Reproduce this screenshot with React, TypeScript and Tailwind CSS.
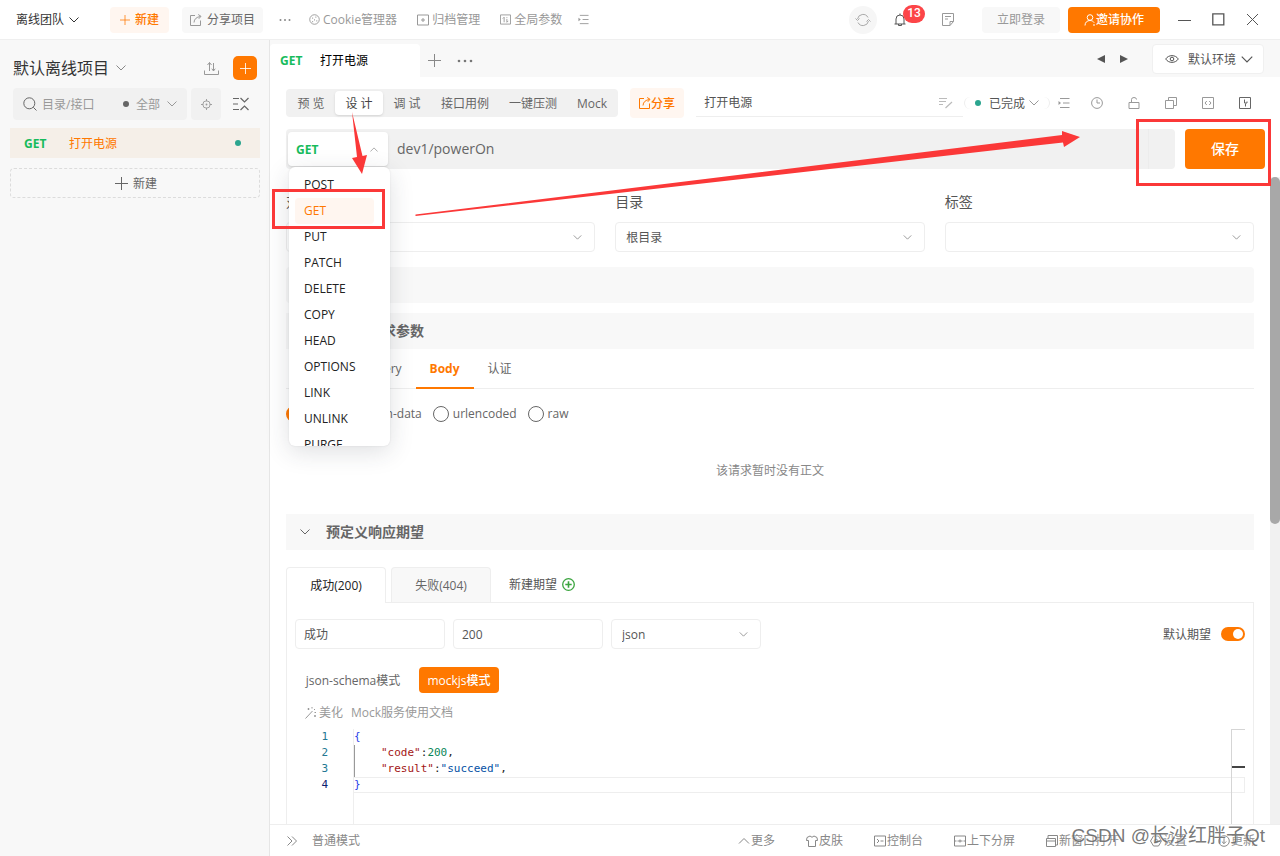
import React, { useState } from "react";

type IconProps = { className?: string; children: React.ReactNode; box?: string; sw?: number };

function Svg({ className = "h-3 w-3", children, box = "0 0 12 12", sw = 1 }: IconProps) {
  return (
    <svg viewBox={box} className={`shrink-0 ${className}`} fill="none" stroke="currentColor" strokeWidth={sw} aria-hidden="true">
      {children}
    </svg>
  );
}

const Chevron = ({ className = "h-1.5 w-2.5" }: { className?: string }) => (
  <Svg className={className} box="0 0 10 6"><path d="M.5.5 5 5 9.500.5" /></Svg>
);
const ChevronUp = ({ className = "h-1.5 w-2.5" }: { className?: string }) => (
  <Svg className={className} box="0 0 10 6"><path d="M.5 5.500 5 1l4.500 4.500" /></Svg>
);
const Plus = ({ className = "h-[13px] w-[13px]" }: { className?: string }) => (
  <Svg className={className} box="0 0 13 13"><path d="M6.500 0v13M0 6.500h13" /></Svg>
);
const Share = ({ className = "h-3 w-3" }: { className?: string }) => (
  <Svg className={className}><path d="M5 1.500H.5v10h10V6.500M4 8.500C4.200 5 6.500 3 10.500 2.500M8.200.5l2.800 1.800-2.200 2.500" /></Svg>
);
const Dots = ({ className = "h-1 w-3" }: { className?: string }) => (
  <svg viewBox="0 0 12 3" className={`shrink-0 ${className}`} fill="currentColor" aria-hidden="true">
    <circle cx="1.500" cy="1.500" r="1" /><circle cx="6" cy="1.500" r="1" /><circle cx="10.500" cy="1.500" r="1" />
  </svg>
);
const Indent = ({ className = "h-3 w-3" }: { className?: string }) => (
  <Svg className={className}><path d="M2 1.500h9.500M5 6h6.500M2 10.500h9.500" /><path d="M.5 4v4L3 6z" fill="currentColor" stroke="none" /></Svg>
);

function HeaderLink({ icon, label }: { icon: React.ReactNode; label: string }) {
  return <button className="flex items-center gap-[3px] text-[#999]">{icon}{label}</button>;
}

function Header() {
  return (
    <header className="flex h-10 shrink-0 items-center border-b border-[#efefef] bg-white pl-4 pr-[21px]">
      <button className="flex items-center gap-[5px] text-[#333]">离线团队<Chevron /></button>
      <button className="ml-[31px] flex h-[26px] items-center gap-[5px] rounded bg-[#fff6f0] px-2.5 font-medium text-[#ff7800]">
        <Plus className="h-2.5 w-2.5" />新建
      </button>
      <button className="ml-[13px] flex h-[26px] items-center gap-[5px] rounded bg-[#f8f8f8] px-2 text-[#666]">
        <Share className="h-3 w-3 text-[#999]" />分享项目
      </button>
      <button aria-label="更多" className="ml-4 text-[#888]"><Dots /></button>
      <nav className="ml-[18px] flex items-center gap-5">
        <HeaderLink label="Cookie管理器" icon={<Svg className="h-[11px] w-[11px]"><circle cx="6" cy="6" r="5.200" /><path d="M3.500 4.500h1M7 3.500h1M5.500 6.500h1M8 7.500h1M3.500 8.300h1" strokeWidth="1.300" /></Svg>} />
        <HeaderLink label="归档管理" icon={<Svg><path d="M.5 1h11v10H.5zM6 4v4M4 6h4" /></Svg>} />
        <HeaderLink label="全局参数" icon={<Svg className="h-[11px] w-[11px]"><path d="M.5 1h11v10H.5zM4.500 9V3.500L3 5M7.500 3.500v1M7.500 5.500V9L9 7.500" /></Svg>} />
        <button aria-label="缩进" className="-ml-1 text-[#999]"><Indent className="h-[11px] w-[11px]" /></button>
      </nav>
      <div className="ml-auto flex items-center">
        <button aria-label="同步" className="flex h-7 w-7 items-center justify-center rounded-full bg-[#f6f6f6] text-[#aaa]">
          <Svg className="h-4 w-4" box="0 0 16 16"><path d="M2.500 7A5.600 5.600 0 0 1 13 5.500M13.500 9A5.600 5.600 0 0 1 3 10.500M.5 6.500l2 2 2-2M11.500 9.500l2-2 2 2" /></Svg>
        </button>
        <button aria-label="通知 13" className="relative ml-4 text-[#555]">
          <Svg className="h-3.5 w-3.5" box="0 0 14 14"><path d="M3 11V6a4 4 0 0 1 8 0v5M1.500 11h11M7 2V.5M5.500 11v1.500h3V11" /></Svg>
          <span className="absolute -top-2 left-2.5 flex h-[18px] w-[22px] items-center justify-center rounded-full bg-[#fc4548] font-[Roboto] text-[12px] font-medium text-white">13</span>
        </button>
        <button aria-label="文档" className="ml-[35px] text-[#999]">
          <Svg className="h-[13px] w-3" box="0 0 12 13"><path d="M.5.5h11v8l-3.500 4H.5zM11.500 8.500H8v4M3 3.500h6M3 6h3" /></Svg>
        </button>
        <button className="ml-7 h-[26px] rounded bg-[#f8f8f8] px-[15px] text-[#999]">立即登录</button>
        <button className="ml-2 flex h-[26px] items-center rounded bg-[#ff7800] px-4 font-medium text-white">
          <Svg><circle cx="6" cy="3.500" r="2.800" /><path d="M1 11.500C1 8.500 3 6.500 6 6.500c1.800 0 3.300.8 4.200 2.200M9 11h2" /></Svg>邀请协作
        </button>
        <div className="ml-[18px] flex items-center gap-[21px] text-[#555]">
          <button aria-label="最小化"><Svg className="h-[13px] w-[13px]" box="0 0 13 13"><path d="M0 7.500h13" /></Svg></button>
          <button aria-label="最大化"><Svg className="h-[13px] w-[13px]" box="0 0 13 13" sw={1.3}><path d="M.8.8h11v11H.8z" /></Svg></button>
          <button aria-label="关闭"><Svg className="h-[13px] w-[13px]" box="0 0 13 13"><path d="m1 1 11 11M12 1 1 12" /></Svg></button>
        </div>
      </div>
    </header>
  );
}

function Sidebar() {
  return (
    <aside className="w-[270px] shrink-0 border-r border-[#e6e6e6] bg-[#f8f8f8] pl-2.5 pr-[9px] pt-4">
      <div className="flex items-center pl-[3px] pr-[3px]">
        <button className="flex items-center gap-[7px] text-base leading-6 text-[#333]">默认离线项目<Chevron className="h-1.5 w-2.5 text-[#888]" /></button>
        <button aria-label="导入导出" className="ml-auto text-[#999]">
          <Svg className="h-[15px] w-[15px]" box="0 0 15 15"><path d="M.5 9.500v4h14v-4M5.500 10V1.500M3.500 4l2-2.500 2 2.500M9.500 2v8M7.800 7.700 9.500 10l1.700-2.300" /></Svg>
        </button>
        <button aria-label="新建" className="ml-3.5 flex h-6 w-6 items-center justify-center rounded-[5px] bg-[#ff7800] text-white"><Plus className="h-[11px] w-[11px]" /></button>
      </div>
      <div className="mt-2 flex items-center pl-[3px]">
        <div className="flex h-8 w-[174px] items-center rounded bg-[#f1f1f1] px-2.5">
          <Svg className="h-3.5 w-3.5 text-[#666]" box="0 0 14 14"><circle cx="6.300" cy="6.300" r="5.500" /><path d="m10.300 10.300 3.200 3.200" /></Svg>
          <input aria-label="搜索" placeholder="目录/接口" className="ml-[5px] w-0 flex-1 bg-transparent text-[12px] outline-none placeholder:text-[#999]" />
          <button className="flex items-center gap-[7px] text-[#999]"><i className="h-1.5 w-1.5 rounded-full bg-[#666]" />全部<Chevron className="h-1.5 w-2.5" /></button>
        </div>
        <button aria-label="定位" className="ml-1 flex h-8 w-[30px] items-center justify-center rounded bg-[#f1f1f1] text-[#999]">
          <Svg className="h-[11px] w-[11px]"><circle cx="6" cy="6" r="4" /><path d="M6 0v2.500M6 9.500V12M0 6h2.500M9.500 6H12" /><circle cx="6" cy="6" r="1" fill="currentColor" stroke="none" /></Svg>
        </button>
        <button aria-label="折叠" className="ml-3 text-[#666]">
          <Svg className="h-3.5 w-4" box="0 0 16 14" sw={1.2}><path d="M0 1.500h6M0 7h5M0 12.500h6M7.500 1l4 4 4-4M7.500 13l4-4 4 4" /></Svg>
        </button>
      </div>
      <a href="#power" className="mt-2 flex h-[30px] items-center bg-[#f5efe8] px-3.5">
        <b className="w-[45px] font-bold text-[#17bb5c]">GET</b>
        <span className="text-[#ff7800]">打开电源</span>
        <i className="ml-auto mr-[5px] h-1.5 w-1.5 rounded-full bg-[#2ba58f]" />
      </a>
      <button className="mt-2.5 flex h-[30px] w-full items-center justify-center gap-[5px] rounded border border-dashed border-[#dcdcdc] pl-0.5 text-[#666]">
        <Plus />新建
      </button>
    </aside>
  );
}

function TabBar() {
  return (
    <div className="flex h-[37px] shrink-0 items-end bg-[#f8f8f8] pr-4">
      <button className="flex h-[33px] w-[150px] items-center rounded-t bg-white pl-2.5">
        <b className="w-10 text-left font-bold text-[#17bb5c]">GET</b><span className="text-black">打开电源</span>
      </button>
      <button aria-label="新标签" className="flex h-[33px] items-center px-2 text-[#888]"><Plus /></button>
      <button aria-label="标签菜单" className="flex h-[33px] items-center px-2 text-[#777]"><Dots className="h-1 w-4" /></button>
      <div className="mb-1 ml-auto flex h-7 items-center">
        <button aria-label="上一个" className="text-[#555]"><svg viewBox="0 0 8 8" className="h-2 w-2" fill="currentColor"><path d="M8 0v8L0 4z" /></svg></button>
        <button aria-label="下一个" className="ml-[15px] text-[#555]"><svg viewBox="0 0 8 8" className="h-2 w-2" fill="currentColor"><path d="M0 0v8l8-4z" /></svg></button>
        <button className="ml-6 flex h-[30px] items-center rounded border border-[#f0f0f0] bg-white pl-3 pr-2.5 text-[#555]">
          <Svg className="mr-[9px] h-3.5 w-3.5" box="0 0 14 14"><path d="M.7 7C3.500 2.500 10.500 2.500 13.300 7 10.500 11.500 3.500 11.500.7 7z" /><circle cx="7" cy="7" r="1.800" /></Svg>
          默认环境<Chevron className="ml-[5px] h-[7px] w-3" />
        </button>
      </div>
    </div>
  );
}

const VIEWS = ["预 览", "设 计", "调 试", "接口用例", "一键压测", "Mock"];

function Toolbar() {
  return (
    <div className="mt-3 flex h-7 shrink-0 items-center pl-4 pr-[29px]">
      <div className="flex shrink-0 rounded bg-[#f1f1f1] px-px py-0.5 text-[#666]">
        {VIEWS.map((v, i) => (
          <button key={v} className={i === 1 ? "h-6 w-12 rounded bg-white text-[#444] shadow-sm" : i < 3 ? "h-6 w-12" : "h-6 px-2.5"}>{v}</button>
        ))}
      </div>
      <button className="ml-3 flex h-[30px] shrink-0 items-center rounded bg-[#fff6f0] px-[9px] font-medium text-[#ff7800]"><Share />分享</button>
      <label className="ml-3 mr-px flex h-7 min-w-0 flex-1 items-center border-b border-[#eee] pl-2 pr-2.5">
        <input aria-label="接口名称" defaultValue="打开电源" className="w-0 flex-1 text-[#555] outline-none" />
        <Svg className="h-3 w-3.5 text-[#bbb]" box="0 0 14 12" sw={1.2}><path d="M0 1.500h8M0 4.500h7M0 7.500h4M6.500 11l6.500-6" /></Svg>
      </label>
      <div className="flex h-3 items-center rounded-full border-x border-[#eee] px-2.5">
        <button className="flex items-center text-[#555]"><i className="mr-2 h-1.5 w-1.5 rounded-full bg-[#2ba58f]" />已完成<Chevron className="ml-1 h-1.5 w-2.5 text-[#999]" /></button>
      </div>
      <button aria-label="目录" className="ml-2 text-[#999]"><Indent /></button>
      <div className="ml-[21px] flex gap-[25px] text-[#999]">
        <button aria-label="历史"><Svg><circle cx="6" cy="6" r="5.400" /><path d="M6 2.500V6h3" /></Svg></button>
        <button aria-label="锁定"><Svg><path d="M1 5.500h10v6H1zM3.500 5.500v-3Q3.500.5 6 .5T8.500 2.500" /></Svg></button>
        <button aria-label="复制"><Svg><path d="M.5 3.500h8v8h-8zM3.500 3V.5h8v8H9" /></Svg></button>
        <button aria-label="代码"><Svg><path d="M.5.5h11v11H.5zM4.800 4 3 6l1.800 2M7.200 4 9 6 7.200 8" /></Svg></button>
        <button aria-label="快捷" className="text-[#666]"><Svg><path d="M.5.5h11v11H.5zM5.500 2.500v3.500H8v-1.500M6.500 9.500V6.500" /></Svg></button>
      </div>
    </div>
  );
}

const METHODS = ["POST", "GET", "PUT", "PATCH", "DELETE", "COPY", "HEAD", "OPTIONS", "LINK", "UNLINK", "PURGE"];

function UrlRow() {
  const [method, setMethod] = useState("GET");
  return (
    <div className="mt-3 flex h-10 shrink-0 gap-2.5 pl-4 pr-[15px]">
      <div className="flex min-w-0 flex-1 items-center rounded bg-[#f1f1f1] pl-0.5">
        <div className="relative z-10">
          <button aria-haspopup="listbox" aria-expanded="true" className="flex h-[34px] w-[100px] items-center justify-between rounded bg-white pl-2 pr-2.5 font-bold text-[#17bb5c] shadow-sm">
            {method}<ChevronUp className="h-[5px] w-2 text-[#999]" />
          </button>
          <ul role="listbox" aria-label="请求方法" className="absolute left-px top-[35px] h-[279px] w-[101px] overflow-hidden rounded-md bg-white pl-1.5 pr-4 pt-[5px] shadow-[0_6px_24px_rgba(40,45,60,0.15),0_0_2px_rgba(0,0,0,0.1)]">
            {METHODS.map((m) => (
              <li key={m} role="option" aria-selected={m === method} onClick={() => setMethod(m)}
                className={m === method ? "h-[26px] rounded bg-[#fff6f0] pl-[9px] leading-[26px] text-[#ff7800]" : "h-[26px] pl-[9px] leading-[26px] text-[#222]"}>
                {m}
              </li>
            ))}
          </ul>
        </div>
        <input aria-label="请求地址" defaultValue="dev1/powerOn" className="ml-[9px] min-w-0 flex-1 text-sm text-[#666] outline-none" />
        <i className="h-full w-[27px] rounded-r border-l border-[#ececec]" />
      </div>
      <button className="w-20 rounded bg-[#ff7800] text-sm font-medium text-white">保存</button>
    </div>
  );
}

function Select({ id, options, label }: { id: string; options: string[]; label: string }) {
  return (
    <div className="grid h-[30px] items-center rounded border border-[#eee] bg-white">
      <select id={id} aria-label={label} className="col-start-1 row-start-1 h-full w-full appearance-none bg-transparent px-2.5 text-[#555] outline-none">
        {options.map((o) => <option key={o}>{o}</option>)}
      </select>
      <Chevron className="pointer-events-none col-start-1 row-start-1 mr-3 h-[5px] w-[9px] justify-self-end text-[#888]" />
    </div>
  );
}

function Field({ id, label, options }: { id: string; label: string; options: string[] }) {
  return (
    <div className="flex flex-col gap-2.5">
      <label htmlFor={id} className="text-sm leading-5 text-[#555]">{label}</label>
      <Select id={id} label={label} options={options} />
    </div>
  );
}

function SectionTitle({ title }: { title: string }) {
  return (
    <h2 className="flex h-9 items-center gap-4 bg-[#f8f8f8] px-3.5 text-sm font-bold text-[#666]"><Chevron className="h-1.5 w-2.5" />{title}</h2>
  );
}

function Radio({ label, checked }: { label: string; checked?: boolean }) {
  return (
    <label className="flex items-center gap-1">
      <input type="radio" name="body" defaultChecked={checked} className="h-4 w-4 appearance-none rounded-full border border-[#666] checked:border-[5px] checked:border-[#ff7800]" />
      {label}
    </label>
  );
}

function Editor() {
  return (
    <div className="mr-2 flex min-h-0 flex-1 font-['DejaVu_Sans_Mono','Noto_Sans_CJK_SC',monospace] text-[11px] leading-4">
      <div className="w-[59px] shrink-0 border-r border-[#eee] pr-[25px] text-right text-[#237893]">
        <div>1</div><div>2</div><div>3</div><div className="text-[#0b216f]">4</div>
      </div>
      <div className="flex min-w-0 flex-1">
        <pre className="min-w-0 flex-1 font-[inherit] text-[#222]">
          <div className="text-[#2a3fe8]">{"{"}</div>
          <div className="border-l border-[#999] pl-[26px]"><span className="text-[#a31515]">"code"</span>:<span className="text-[#098658]">200</span>,</div>
          <div className="border-l border-[#999] pl-[26px]"><span className="text-[#a31515]">"result"</span>:<span className="text-[#0451a5]">"succeed"</span>,</div>
          <div className="h-4 border-y border-[#eee] leading-[14px] text-[#2a3fe8]">{"}"}</div>
        </pre>
        <div className="flex w-3.5 flex-col border-l border-t border-[#d5d5d5]">
          <i className="mt-9 h-0.5 bg-[#444]" />
          <i className="mt-[9px] h-4 border-y border-r border-[#eee]" />
        </div>
      </div>
    </div>
  );
}

function Expectation() {
  return (
    <>
      <div className="mt-[17px] flex shrink-0 items-end">
        <button className="z-[1] -mb-px h-9 w-[100px] rounded-t border border-b-0 border-[#eee] bg-white text-[#222]">成功(200)</button>
        <button className="ml-[5px] h-[35px] w-[100px] rounded-t border border-b-0 border-[#eee] bg-[#f8f8f8] text-[#666]">失败(404)</button>
        <button className="mb-1 ml-[18px] flex h-7 items-center gap-[5px] text-[#555]">
          新建期望
          <Svg className="h-[13px] w-[13px] text-[#3ba53f]" box="0 0 13 13" sw={1.3}><circle cx="6.500" cy="6.500" r="5.800" /><path d="M6.500 3.300v6.400M3.300 6.500h6.400" strokeWidth="1.600" /></Svg>
        </button>
      </div>
      <div className="flex min-h-0 flex-1 flex-col border border-b-0 border-[#eee] pl-2">
        <div className="mt-4 flex items-center gap-2 pr-2">
          <input aria-label="名称" defaultValue="成功" className="h-[30px] w-[150px] rounded border border-[#eee] px-2 text-[#555] outline-none" />
          <input aria-label="状态码" defaultValue="200" className="h-[30px] w-[150px] rounded border border-[#eee] px-2 text-[#555] outline-none" />
          <div className="w-[150px]"><Select id="fmt" label="格式" options={["json"]} /></div>
          <label className="ml-auto flex items-center gap-2.5 text-[#555]">
            默认期望
            <span className="flex h-3.5 w-6 items-center justify-end rounded-full bg-[#ff7800] pr-0.5">
              <input type="checkbox" defaultChecked className="h-2.5 w-2.5 appearance-none rounded-full bg-white" />
            </span>
          </label>
        </div>
        <div className="mt-[18px] flex items-center">
          <button className="h-[26px] w-[116px] text-[#666]">json-schema模式</button>
          <button className="ml-2 h-[26px] w-20 rounded-sm bg-[#ff7800] font-medium text-white">mockjs模式</button>
        </div>
        <div className="mb-[7px] mt-2.5 flex h-[19px] items-center gap-2 pl-2.5 text-[#999]">
          <button className="flex items-center gap-0.5">
            <Svg><path d="m.5 11.500 7-7.500M3.500 1v2M2.500 2h2M7 0v1.500M10 2 9 3M9.500 5.500H11M10 8v2M9 9h2" /></Svg>美化
          </button>
          <a href="#docs">Mock服务使用文档</a>
        </div>
        <Editor />
      </div>
    </>
  );
}

function Content() {
  return (
    <div className="flex min-h-0 flex-1">
      <div className="flex min-w-0 flex-1 flex-col overflow-hidden pl-4 pr-4 pt-[23px]">
        <div className="grid shrink-0 grid-cols-3 gap-5">
          <Field id="kind" label="对象" options={[""]} />
          <Field id="dir" label="目录" options={["根目录"]} />
          <Field id="tag" label="标签" options={[""]} />
        </div>
        <div className="mt-[15px] h-9 shrink-0 rounded bg-[#f8f8f8]" />
        <div className="mt-2.5 shrink-0"><SectionTitle title="预定义请求参数" /></div>
        <div className="flex h-10 shrink-0 border-b border-[#eee] text-[#666]">
          <button className="pl-3 pr-3.5">Header</button>
          <button className="px-3.5">Query</button>
          <button className="-mb-px border-b-2 border-[#ff7800] px-3.5 font-bold text-[#ff7800]">Body</button>
          <button className="px-3.5">认证</button>
        </div>
        <div className="mt-[15px] flex h-[19px] shrink-0 items-center gap-[11px] text-[#666]">
          <Radio label="none" checked /><Radio label="form-data" /><Radio label="urlencoded" /><Radio label="raw" />
        </div>
        <p className="shrink-0 pb-[34px] pt-[38px] text-center text-[#888]">该请求暂时没有正文</p>
        <div className="shrink-0"><SectionTitle title="预定义响应期望" /></div>
        <Expectation />
      </div>
      <div className="mt-2 w-2.5 shrink-0 bg-[#f1f1f1]"><div className="h-[347px] rounded-full bg-[#a8a8a8]" /></div>
    </div>
  );
}

const FOOT: [string, React.ReactNode][] = [
  ["更多", <path d="m1 8.500 5-5 5 5" />],
  ["皮肤", <path d="M4 1 1 2.500.5 5.500h2v6h7v-6h2L11 2.500 8 1Q6 3.500 4 1z" />],
  ["控制台", <path d="M.5 1h11v10H.5zM3 4l2 2-2 2M6.500 6h3" />],
  ["上下分屏", <path d="M.5 1h11v10H.5zM.5 6h2M9.500 6h2M3.500 6h5M6 4.500v3" />],
  ["新窗口打开", <path d="M.5 3.500h9v8h-9zM2 3V.5h9.500v9.500H10M.5 6h9" />],
  ["设置", <g><path d="M3.500 1h5L11.500 6l-3 5h-5l-3-5z" /><circle cx="6" cy="6" r="1.800" /></g>],
  ["更新", <g><circle cx="6" cy="6" r="5.300" /><path d="M6 3v5.500M3.800 6.500 6 8.700l2.200-2.200" /></g>],
];

function Footer() {
  return (
    <footer className="flex h-8 shrink-0 items-center border-t border-[#eee] bg-white pl-[17px] pr-[25px] text-[#888]">
      <button aria-label="展开"><Svg className="h-2.5 w-2.5" box="0 0 10 10"><path d="m.5.5 4.500 4.500-4.500 4.500M5 .5 9.500 5 5 9.500" /></Svg></button>
      <button className="ml-[15px]">普通模式</button>
      <div className="ml-auto flex gap-[31px]">
        {FOOT.map(([label, icon]) => (
          <button key={label} className="flex items-center gap-px"><Svg>{icon}</Svg>{label}</button>
        ))}
      </div>
    </footer>
  );
}

function Annotations() {
  return (
    <svg viewBox="0 0 1280 856" width="1280" height="856" className="pointer-events-none absolute left-0 top-0 z-20" fill="none" stroke="#fb3838" strokeWidth="3" aria-hidden="true">
      <rect x="273.500" y="190.500" width="110" height="37" />
      <rect x="1137.500" y="120.500" width="132" height="64" />
      <path d="M352 112 362.500 156l4.500-1-5 19-10-16 5-1z" fill="#fb3838" stroke="none" />
      <path d="M415.500 214.500 1062 135v-4l18 6-16 10-1-4.500L415.500 216z" fill="#fb3838" stroke="none" />
    </svg>
  );
}

export default function App() {
  return (
    <div className="relative flex h-screen flex-col overflow-hidden bg-white font-['Open_Sans','Noto_Sans_CJK_SC',sans-serif] text-[12px] leading-[19px]">
      <Header />
      <div className="flex min-h-0 flex-1">
        <Sidebar />
        <main className="flex min-w-0 flex-1 flex-col">
          <TabBar />
          <Toolbar />
          <UrlRow />
          <Content />
          <Footer />
        </main>
      </div>
      <Annotations />
      <div className="pointer-events-none absolute bottom-1.5 right-[15px] z-20 font-['Liberation_Sans','Noto_Sans_CJK_SC',sans-serif] text-[19px] leading-7 text-[#555]/80 [text-shadow:0_0_2px_white]">CSDN @长沙红胖子Qt</div>
    </div>
  );
}
